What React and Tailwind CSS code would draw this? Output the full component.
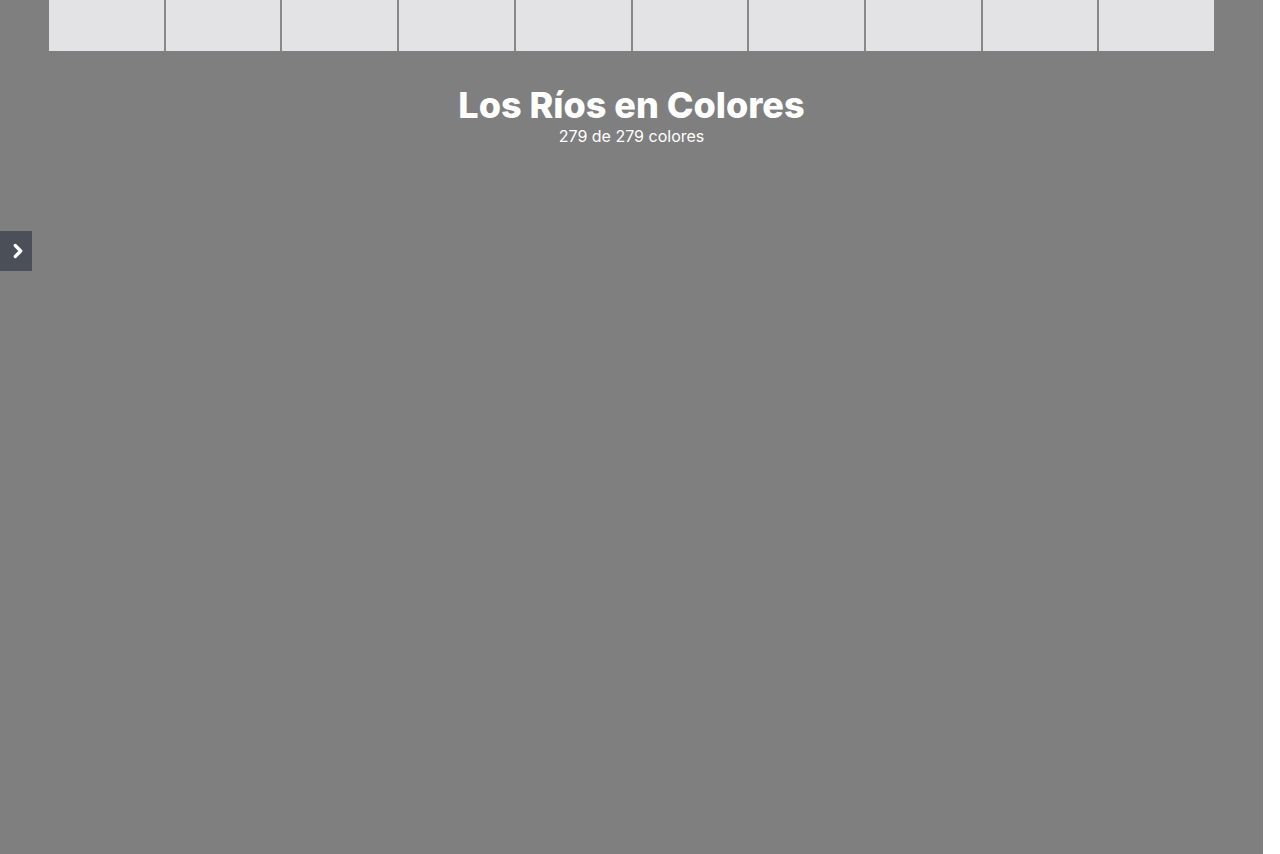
import { ChevronRight } from "lucide-react";

const tiles = Array.from({ length: 10 }, (_, i) => i);

const App = () => {
    return (
        <div className="flex min-h-[854px] w-full bg-white" style={{ fontFamily: "Inter, 'Noto Sans', sans-serif" }}>
            <div className="relative w-[1263px] min-h-[854px] bg-[#7f7f7f]">
                <div className="mx-auto flex w-[1165px] gap-[2px] bg-[#888888]">
                    {tiles.map((t) => (
                        <div key={t} className="h-[51px] flex-1 bg-[#e3e3e5]" />
                    ))}
                </div>

                <div className="mt-[33px] flex flex-col items-center text-white">
                    <h1 className="text-[36px] font-extrabold leading-[42px] tracking-[0px]">Los Ríos en Colores</h1>
                    <p className="text-[16px] leading-[21px]">279 de 279 colores</p>
                </div>

                <button className="absolute left-0 top-[231px] flex h-[40px] w-[32px] items-center justify-center bg-[#4b5058] pl-[4px] text-white">
                    <ChevronRight size={22} strokeWidth={3.5} />
                </button>
            </div>
        </div>
    );
};

export default App;
